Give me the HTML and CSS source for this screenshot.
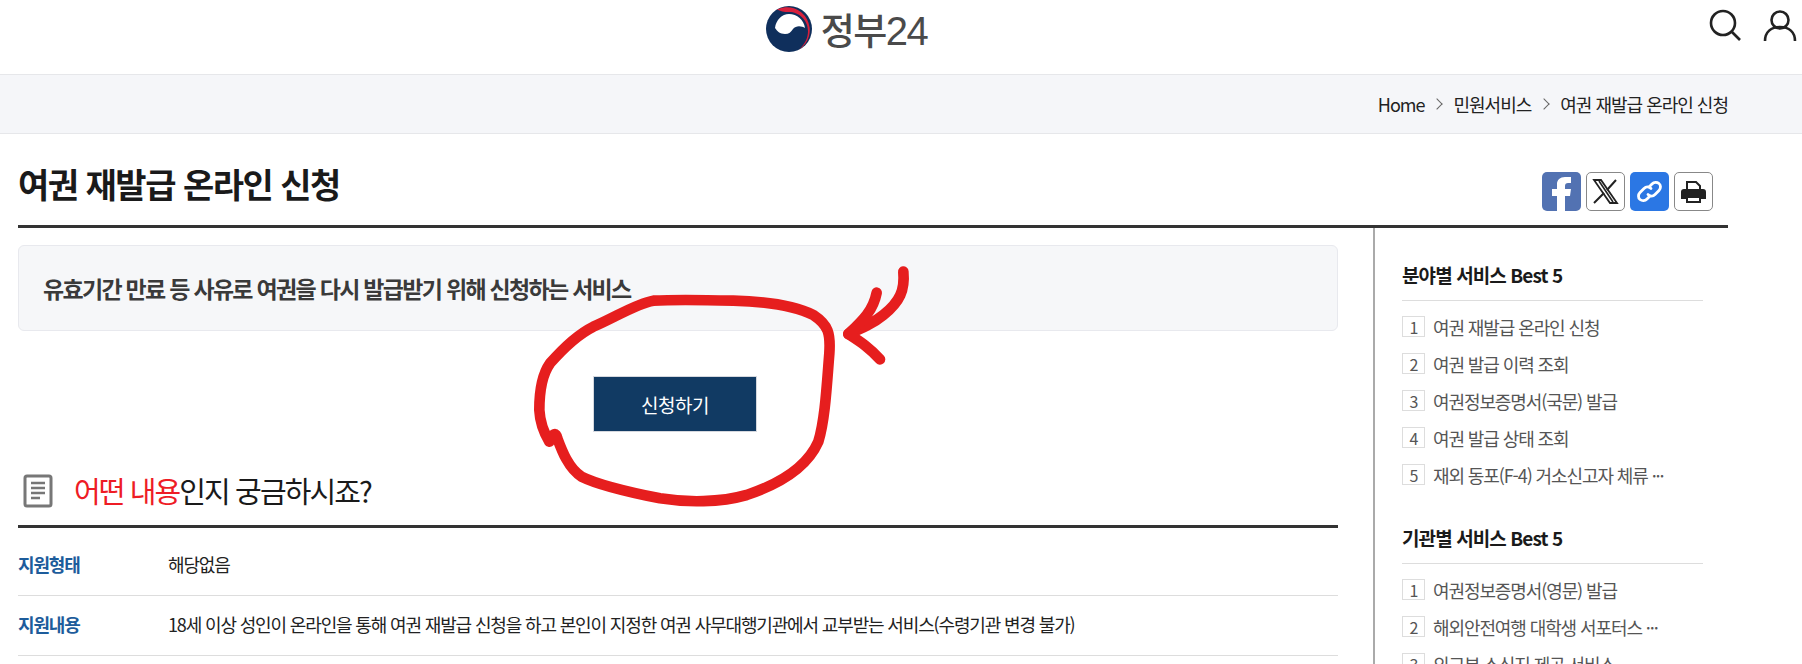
FILE: index.html
```html
<!DOCTYPE html>
<html lang="ko">
<head>
    <meta charset="utf-8">
    <title>여권 재발급 온라인 신청 | 정부24</title>
    <link rel="stylesheet" href="styles.css">
</head>

<body>
    <header class="top">
        <a class="logo" href="#">
            <svg class="logo-mark" viewBox="0 0 46 46" width="46" height="46">
                <circle cx="23" cy="23" r="23" fill="#0f2f5c"/>
                <path d="M11 3.4A23 23 0 0 1 33 43.7C39 38 42 32 42 25 42 14 33 6 23 6 18 6 14 5 11 3.4z" fill="#d8203c"/>
                <path d="M9 22C10 14 16 8 23 8c8 0 15 6 16 14-3-2-9-3-12 1-2 3-4 5-8 5-5 0-8-3-10-6z" fill="#fff"/>
            </svg>
            <span class="logo-text">정부<span class="logo-num">24</span></span>
        </a>
        <div class="top-icons">
            <svg viewBox="0 0 34 34" width="34" height="34"><circle cx="15" cy="15" r="12" fill="none" stroke="#222" stroke-width="2.6"/><path d="M24 24l8 8" stroke="#222" stroke-width="2.6" fill="none"/></svg>
            <svg viewBox="0 0 34 34" width="34" height="34"><circle cx="17" cy="12" r="8.5" fill="none" stroke="#222" stroke-width="2.6"/><path d="M2 33c0-9 6-14 15-14s15 5 15 14" fill="none" stroke="#222" stroke-width="2.6"/></svg>
        </div>
    </header>

    <nav class="crumbs">
        <div class="crumbs-inner">
            <span>Home</span><i class="chev"></i><span>민원서비스</span><i class="chev"></i><span>여권 재발급 온라인 신청</span>
        </div>
    </nav>

    <div class="page">
        <div class="title-row">
            <h1>여권 재발급 온라인 신청</h1>
            <div class="share">
                <a class="share-btn fb"><svg viewBox="0 0 39 39" width="39" height="39"><path d="M15 39V24h-5v-7h5v-5c0-4 3-7 8-7h6v6h-3c-2 0-3 1-3 3v3h6l-1 7h-5v15z" fill="#fff"/></svg></a>
                <a class="share-btn outline"><svg viewBox="0 0 37 37" width="37" height="37"><path d="M7 7h7l16 23h-7z" fill="#fff" stroke="#222" stroke-width="1.8"/><path d="M29 7L20 17M17 20L7 30" fill="none" stroke="#222" stroke-width="2"/><path d="M12 8l14 21" stroke="#222" stroke-width="1.6"/></svg></a>
                <a class="share-btn link"><svg viewBox="0 0 39 39" width="39" height="39"><g fill="none" stroke="#fff" stroke-width="2.8" stroke-linecap="round"><path d="M19 15l3-3c2-2 5-2 7-.5s2 5 0 7l-4 4c-2 2-5 2-7 0"/><path d="M20 24l-3 3c-2 2-5 2-7 .5s-2-5 0-7l4-4c2-2 5-2 7 0"/></g></svg></a>
                <a class="share-btn outline"><svg viewBox="0 0 37 37" width="37" height="37"><path d="M12 9h9l4 4v4H12z" fill="#fff" stroke="#222" stroke-width="2"/><path d="M9 16h19a3 3 0 0 1 3 3v7h-5v-3H11v3H6v-7a3 3 0 0 1 3-3z" fill="#222"/><path d="M12 24h13v5H12z" fill="#fff" stroke="#222" stroke-width="2"/></svg></a>
            </div>
        </div>

        <div class="columns">
            <main class="content">
                <div class="summary">유효기간 만료 등 사유로 여권을 다시 발급받기 위해 신청하는 서비스</div>
                <div class="apply-wrap"><a class="apply" href="#">신청하기</a></div>

                <h2 class="section-title">
                    <svg viewBox="0 0 30 34" width="30" height="34"><rect x="2" y="2" width="26" height="30" rx="2" fill="none" stroke="#777" stroke-width="3"/><path d="M8 9h14M8 14h14M8 19h14M8 24h9" stroke="#777" stroke-width="2.6"/></svg>
                    <span><em>어떤 내용</em>인지 궁금하시죠?</span>
                </h2>
                <dl class="info">
                    <div class="info-row"><dt>지원형태</dt><dd>해당없음</dd></div>
                    <div class="info-row"><dt>지원내용</dt><dd>18세 이상 성인이 온라인을 통해 여권 재발급 신청을 하고 본인이 지정한 여권 사무대행기관에서 교부받는 서비스(수령기관 변경 불가)</dd></div>
                </dl>
            </main>

            <aside class="side">
                <section class="best">
                    <h3>분야별 서비스 Best 5</h3>
                    <ol>
                        <li><b>1</b><span>여권 재발급 온라인 신청</span></li>
                        <li><b>2</b><span>여권 발급 이력 조회</span></li>
                        <li><b>3</b><span>여권정보증명서(국문) 발급</span></li>
                        <li><b>4</b><span>여권 발급 상태 조회</span></li>
                        <li><b>5</b><span>재외 동포(F-4) 거소신고자 체류 ···</span></li>
                    </ol>
                </section>
                <section class="best">
                    <h3>기관별 서비스 Best 5</h3>
                    <ol>
                        <li><b>1</b><span>여권정보증명서(영문) 발급</span></li>
                        <li><b>2</b><span>해외안전여행 대학생 서포터스 ···</span></li>
                        <li><b>3</b><span>외교부 소식지 제공 서비스</span></li>
                    </ol>
                </section>
            </aside>
        </div>
    </div>

    <svg class="scribble" viewBox="0 0 1200 780" width="400" height="260">
        <g fill="none" stroke="#e61e1e" stroke-width="32" stroke-linecap="round" stroke-linejoin="round">
            <path d="M88 545C98 520 108 515 112 535C125 570 145 625 185 650C235 675 320 695 420 715C500 728 600 728 680 705C770 675 860 625 895 545C915 480 920 380 928 280C932 220 925 195 880 165C830 140 760 125 640 122C560 120 470 118 400 122C350 130 290 170 220 200C170 225 125 270 90 310C65 345 58 390 58 450C60 490 70 515 88 545"/>
            <path d="M1150 35C1155 90 1140 125 1090 165C1060 190 1025 205 985 222"/>
            <path d="M1070 98C1060 150 1030 180 985 222C1020 245 1045 260 1080 298"/>
        </g>
    </svg>
</body>

</html>
```
FILE: styles.css
```css
* {
    box-sizing: border-box;
}

html, body {
    height: 664px;
    overflow: hidden;
}

body {
    margin: 0;
    position: relative;
    background-color: #fff;
    color: #1a1a1a;
    font-family: "Noto Sans CJK KR", "Noto Sans", sans-serif;
    letter-spacing: -0.5px;
}

a {
    color: inherit;
    text-decoration: none;
}

.top {
    height: 75px;
    display: flex;
    align-items: flex-start;
    justify-content: center;
    position: relative;
    border-bottom: 1px solid #e6e7ea;
}

.logo {
    display: flex;
    align-items: center;
    gap: 9px;
    height: 58px;
    margin-right: 109px;
}

.logo-text {
    font-size: 37px;
    font-weight: 500;
    color: #4a4a4a;
    letter-spacing: -1.5px;
}

.logo-num {
    font-family: "Liberation Sans", sans-serif;
    font-weight: 400;
    font-size: 40px;
}

.top-icons {
    position: absolute;
    right: 5px;
    top: 8px;
    display: flex;
    gap: 21px;
}

.crumbs {
    height: 59px;
    background-color: #f5f6f9;
    border-bottom: 1px solid #e6e7ea;
    padding: 0 74px 0 18px;
}

.crumbs-inner {
    height: 100%;
    display: flex;
    align-items: center;
    justify-content: flex-end;
    font-size: 18px;
    color: #222;
    letter-spacing: -1px;
}

.chev {
    width: 8px;
    height: 8px;
    margin: 0 12px 0 9px;
    border-top: 1.5px solid #666;
    border-right: 1.5px solid #666;
    transform: rotate(45deg);
}

.page {
    padding: 0 74px 0 18px;
}

.title-row {
    height: 94px;
    display: flex;
    justify-content: space-between;
    align-items: flex-start;
    border-bottom: 3px solid #333;
}

h1 {
    margin: 28px 0 0;
    font-size: 34px;
    line-height: 44px;
    font-weight: 700;
    letter-spacing: -1.5px;
}

.share {
    display: flex;
    gap: 5px;
    margin: 38px 15px 0 0;
}

.share-btn {
    width: 39px;
    height: 39px;
    border-radius: 5px;
    display: flex;
    align-items: center;
    justify-content: center;
    overflow: hidden;
}

.fb {
    background-color: #5272b2;
}

.link {
    background-color: #2b77e4;
}

.outline {
    border: 1px solid #888;
}

.columns {
    display: flex;
}

.content {
    width: 1357px;
    padding: 17px 35px 0 0;
    border-right: 2px solid #aaa;
}

.summary {
    height: 86px;
    padding-left: 24px;
    display: flex;
    align-items: center;
    background-color: #f6f7f9;
    border: 1px solid #e8e9ee;
    border-radius: 6px;
    font-size: 23px;
    font-weight: 700;
    color: #3a3a3a;
    letter-spacing: -1.7px;
}

.apply-wrap {
    display: flex;
    justify-content: center;
    padding: 45px 6px 0 0;
}

.apply {
    width: 164px;
    height: 56px;
    display: flex;
    align-items: center;
    justify-content: center;
    background-color: #113a63;
    border: 1px solid #d5d8de;
    color: #fff;
    font-size: 19px;
}

.section-title {
    margin: 38px 0 0;
    height: 58px;
    display: flex;
    align-items: flex-start;
    gap: 21px;
    padding-left: 5px;
    border-bottom: 3px solid #333;
    font-size: 29px;
    line-height: 40px;
    font-weight: 400;
    letter-spacing: -1.9px;
}

.section-title svg {
    margin-top: 4px;
}

.section-title em {
    font-style: normal;
    color: #ee1c25;
}

.info {
    margin: 0;
    padding-top: 8px;
}

.info-row {
    display: flex;
    height: 60px;
    padding-bottom: 4px;
    align-items: center;
    border-bottom: 1px solid #ddd;
    font-size: 18px;
    letter-spacing: -1.15px;
}

.info-row dt {
    width: 150px;
    font-weight: 700;
    color: #1d5c9b;
}

.info-row dd {
    margin: 0;
    color: #222;
}

.side {
    padding: 32px 0 0 27px;
    width: 328px;
}

.best {
    margin-bottom: 30px;
}

.best h3 {
    margin: 0;
    height: 41px;
    border-bottom: 1px solid #ddd;
    font-size: 19px;
    line-height: 30px;
    font-weight: 700;
    letter-spacing: -0.9px;
}

.best ol {
    margin: 0;
    padding: 7px 0 0;
    list-style: none;
}

.best li {
    height: 37px;
    display: flex;
    align-items: center;
    font-size: 18px;
    color: #555;
    letter-spacing: -1.1px;
}

.best b {
    width: 23px;
    height: 21px;
    margin-right: 8px;
    display: flex;
    align-items: center;
    justify-content: center;
    border: 1px solid #ddd;
    font-weight: 400;
    font-size: 16px;
}

.scribble {
    position: absolute;
    left: 520px;
    top: 260px;
}
```
